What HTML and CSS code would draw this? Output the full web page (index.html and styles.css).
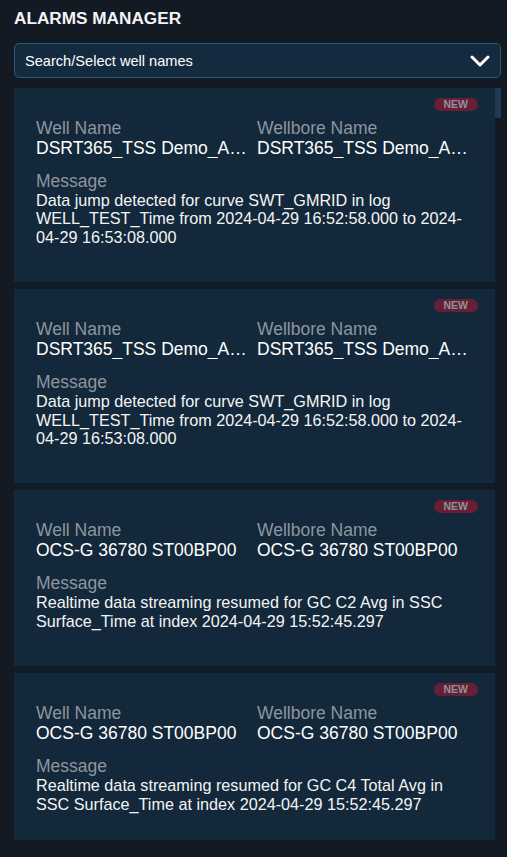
FILE: index.html
```html
<!DOCTYPE html>
<html>
<head>
    <title>Alarms Manager</title>
    <link rel="stylesheet" href="styles.css">
</head>
<body>
    <div class="panel">
        <h2 class="title">ALARMS MANAGER</h2>

        <div class="select">
            <span class="select-text">Search/Select well names</span>
            <svg class="chevron" width="20" height="12" viewBox="0 0 20 12">
                <path d="M2 2 L10 10 L18 2" fill="none" stroke="#fff" stroke-width="3" stroke-linecap="round" stroke-linejoin="round"/>
            </svg>
        </div>

        <div class="list-wrap">
            <div class="alarm-list" id="alarmList"></div>
            <div class="scroll-track"><div class="scroll-thumb"></div></div>
        </div>
    </div>

    <script>
        var alarms = [
            {
                well: "DSRT365_TSS Demo_ALPHA_01",
                wellbore: "DSRT365_TSS Demo_ALPHA_01_WB",
                message: "Data jump detected for curve SWT_GMRID in log WELL_TEST_Time from 2024-04-29 16:52:58.000 to 2024-04-29 16:53:08.000"
            },
            {
                well: "DSRT365_TSS Demo_ALPHA_01",
                wellbore: "DSRT365_TSS Demo_ALPHA_01_WB",
                message: "Data jump detected for curve SWT_GMRID in log WELL_TEST_Time from 2024-04-29 16:52:58.000 to 2024-04-29 16:53:08.000"
            },
            {
                well: "OCS-G 36780 ST00BP00",
                wellbore: "OCS-G 36780 ST00BP00",
                message: "Realtime data streaming resumed for GC C2 Avg in SSC Surface_Time at index 2024-04-29 15:52:45.297"
            },
            {
                well: "OCS-G 36780 ST00BP00",
                wellbore: "OCS-G 36780 ST00BP00",
                message: "Realtime data streaming resumed for GC C4 Total Avg in SSC Surface_Time at index 2024-04-29 15:52:45.297"
            }
        ];

        var list = document.getElementById('alarmList');
        var html = "";

        for (var i = 0; i < alarms.length; i++) {
            var a = alarms[i];
            html +=
                '<div class="alarm">' +
                    '<div class="badge-row"><span class="badge">NEW</span></div>' +
                    '<div class="fields">' +
                        '<div class="field"><div class="label">Well Name</div><div class="value">' + a.well + '</div></div>' +
                        '<div class="field"><div class="label">Wellbore Name</div><div class="value">' + a.wellbore + '</div></div>' +
                    '</div>' +
                    '<div class="label">Message</div>' +
                    '<div class="message">' + a.message + '</div>' +
                '</div>';
        }
        list.innerHTML = html;
    </script>
</body>
</html>
```

FILE: styles.css
```css
body {
    margin: 0;
    background-color: #141a24;
    font-family: "Liberation Sans", Arial, sans-serif;
    color: #fff;
}
.panel {
    padding: 0 6px 17px 14px;
    height: 857px;
    box-sizing: border-box;
    display: flex;
    flex-direction: column;
}
.title {
    margin: 9px 0 0 0;
    font-size: 17.2px;
    font-weight: bold;
    line-height: 19px;
    color: #f2f4f7;
}
.select {
    margin-top: 15px;
    height: 35px;
    box-sizing: border-box;
    border: 1px solid #2e5877;
    border-radius: 5px;
    background: #142a3e;
    display: flex;
    align-items: center;
    justify-content: space-between;
    padding: 0 10px 0 10px;
}
.select-text {
    font-size: 14.6px;
    color: #fff;
}
.chevron {
    display: block;
}
.list-wrap {
    margin-top: 10px;
    flex: 1;
    min-height: 0;
    display: flex;
}
.alarm-list {
    flex: 1;
    overflow: hidden;
}
.scroll-track {
    width: 6px;
}
.scroll-thumb {
    height: 30px;
    background: #1f3a51;
}
.alarm {
    background: #13283a;
    padding: 10px 17px 36px 22px;
    border-bottom: 7px solid #0f1c27;
}
.badge-row {
    display: flex;
    justify-content: flex-end;
}
.badge {
    background: #6a1e35;
    color: #8c939d;
    font-size: 10.5px;
    font-weight: bold;
    line-height: 13px;
    padding: 0 10px;
    border-radius: 7px;
}
.fields {
    display: grid;
    grid-template-columns: 1fr 1fr;
    margin-top: 7px;
    margin-bottom: 13px;
}
.field {
    min-width: 0;
    padding-right: 10px;
}
.label {
    font-size: 17.5px;
    line-height: 20px;
    color: #8e959e;
}
.value {
    font-size: 17.5px;
    line-height: 20px;
    color: #fff;
    white-space: nowrap;
    overflow: hidden;
    text-overflow: ellipsis;
}
.message {
    font-size: 16.2px;
    line-height: 18.4px;
    color: #f4f4f4;
}
```
